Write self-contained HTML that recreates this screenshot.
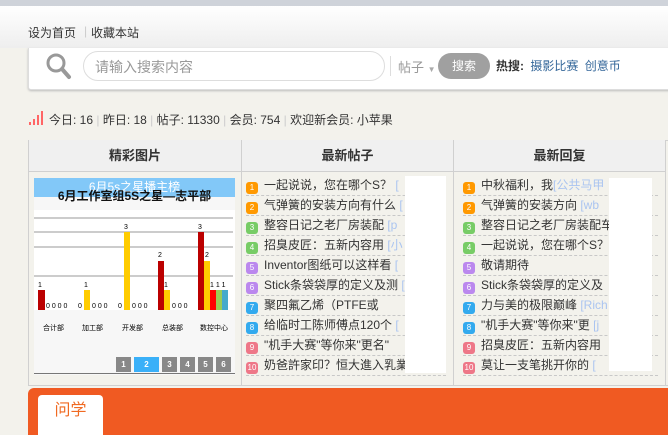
<!DOCTYPE html>
<html><head><meta charset="utf-8"><style>
*{margin:0;padding:0;box-sizing:border-box}
body{width:668px;height:435px;overflow:hidden;background:#f3f2ec;font-family:"Liberation Sans","Noto Sans CJK SC",sans-serif;font-size:12px;color:#333;position:relative}
.abs{position:absolute}
.top{left:0;top:0;width:668px;height:48px;background:linear-gradient(#fff,#eeeeee);border-top:6px solid #cfd3da}
.top span{position:absolute;top:18px;font-size:12px;color:#333}
.sp{left:28px;top:48px;width:650px;height:42px;background:#fff;border:1px solid #ddd;border-top:none;border-radius:0 0 3px 3px;box-shadow:0 1px 2px #bbb}
.inp{left:83px;top:51px;width:302px;height:30px;border:1px solid #ddd;border-radius:15px;background:#fff}
.tbl{left:28px;top:140px;width:645px;height:246px;border:1px solid #d0d0d0}
.th{top:140px;height:32px;background:#f0f0f0;border-bottom:1px solid #d0d0d0;text-align:center;line-height:31px;font-size:13px;color:#333}
.row{position:absolute;height:20px;line-height:19px;font-size:12px;color:#333;border-bottom:1px dashed #c8c8c8;white-space:nowrap;overflow:hidden}
.ic{display:inline-block;width:12px;height:12px;border-radius:3px;color:#fff;font-size:8px;line-height:12px;text-align:center;margin-right:6px;vertical-align:-1px}
.u{color:#aac4f0}
.pg{position:absolute;top:357px;width:15px;height:15px;background:#888;color:#fff;font-size:8px;text-align:center;line-height:15px;font-weight:bold}
</style></head><body>
<div class="abs top"><span style="left:28px">设为首页</span><span style="left:84px;color:#ccc">|</span><span style="left:91px">收藏本站</span></div>
<div class="abs sp"></div>
<svg class="abs" style="left:44px;top:52px" width="30" height="28"><circle cx="12" cy="11" r="8" fill="none" stroke="#999" stroke-width="3"/><line x1="18" y1="17" x2="25" y2="25" stroke="#999" stroke-width="4" stroke-linecap="round"/></svg>
<div class="abs inp"></div>
<div class="abs" style="left:95px;top:57px;font-size:14px;color:#999">请输入搜索内容</div>
<div class="abs" style="left:390px;top:56px;width:1px;height:20px;background:#ddd"></div>
<div class="abs" style="left:398px;top:57px;font-size:13px;color:#999">帖子 <span style="font-size:8px;color:#aaa">▼</span></div>
<div class="abs" style="left:438px;top:53px;width:52px;height:26px;border-radius:13px;background:#a0a0a0;color:#fff;text-align:center;line-height:26px;font-size:12px">搜索</div>
<div class="abs" style="left:496px;top:57px;font-size:12px"><b>热搜:</b> <span style="color:#336699;margin-left:3px">摄影比赛</span> <span style="color:#336699;margin-left:3px">创意币</span></div>
<svg class="abs" style="left:28px;top:111px" width="16" height="14"><rect x="1" y="11" width="2" height="3" fill="#f66"/><rect x="5" y="8" width="2" height="6" fill="#f66"/><rect x="9" y="4" width="2" height="10" fill="#f66"/><rect x="13" y="0" width="2" height="14" fill="#f66"/></svg>
<div class="abs" style="left:49px;top:111px;font-size:12px;color:#333">今日: 16 <span style="color:#ccc">|</span> 昨日: 18 <span style="color:#ccc">|</span> 帖子: 11330 <span style="color:#ccc">|</span> 会员: 754 <span style="color:#ccc">|</span> 欢迎新会员: 小苹果</div>
<div class="abs tbl"></div>
<div class="abs th" style="left:29px;width:212px;font-weight:bold">精彩图片</div>
<div class="abs th" style="left:241px;width:212px;border-left:1px solid #d0d0d0;font-weight:bold">最新帖子</div>
<div class="abs th" style="left:453px;width:212px;border-left:1px solid #d0d0d0;font-weight:bold">最新回复</div>
<div class="abs" style="left:241px;top:172px;width:1px;height:214px;background:#d0d0d0"></div>
<div class="abs" style="left:453px;top:172px;width:1px;height:214px;background:#d0d0d0"></div>
<div class="abs" style="left:665px;top:140px;width:1px;height:246px;background:#d0d0d0"></div>
<!-- chart -->
<div class="abs" style="left:34px;top:178px;width:201px;height:197px;background:#f7f7f7"></div>
<div class="abs" style="left:34px;top:178px;width:201px;height:19px;background:#82c8f8;color:#fff;text-align:center;font-size:12px;line-height:19px">6月5s之星播主榜</div>
<div class="abs" style="left:34px;top:187px;width:201px;text-align:center;font-weight:bold;font-size:12px;color:#111">6月工作室组5S之星—志平部</div>
<svg class="abs" style="left:34px;top:210px" width="201" height="100">
<rect x="0" y="0" width="201" height="100" fill="#fff"/>
<g stroke="#999" stroke-width="1"><line x1="0" y1="8" x2="199" y2="8"/><line x1="0" y1="22" x2="199" y2="22"/><line x1="0" y1="37" x2="199" y2="37"/><line x1="0" y1="66" x2="199" y2="66"/></g>
<rect x="4" y="80" width="7" height="20" fill="#b00"/><rect x="50" y="80" width="6" height="20" fill="#fc0"/>
<rect x="90" y="22" width="6" height="78" fill="#fc0"/>
<rect x="124" y="51" width="6" height="49" fill="#b00"/><rect x="130" y="80" width="6" height="20" fill="#fc0"/>
<rect x="164" y="22" width="6" height="78" fill="#b00"/><rect x="170" y="51" width="6" height="49" fill="#fc0"/><rect x="176" y="80" width="6" height="20" fill="#f00"/><rect x="182" y="80" width="6" height="20" fill="#9c5"/><rect x="188" y="80" width="6" height="20" fill="#4ac"/>
<g font-size="7" fill="#000"><text x="4" y="77">1</text><text x="50" y="77">1</text><text x="90" y="19">3</text><text x="124" y="47">2</text><text x="164" y="19">3</text><text x="171" y="47">2</text><text x="130" y="77">1</text><text x="176" y="77">1 1 1</text><text x="12" y="98">0 0 0 0</text><text x="44" y="98">0</text><text x="58" y="98">0 0 0</text><text x="84" y="98">0</text><text x="98" y="98">0 0 0</text><text x="138" y="98">0 0 0</text></g>
</svg>
<div class="abs" style="left:34px;top:323px;width:201px;font-size:7px;color:#000"><span style="position:absolute;left:9px">合计部</span><span style="position:absolute;left:48px">加工部</span><span style="position:absolute;left:88px">开发部</span><span style="position:absolute;left:128px">总装部</span><span style="position:absolute;left:166px">数控中心</span></div>
<div class="pg" style="left:116px">1</div><div class="pg" style="left:134px;width:25px;background:#3ab0f8">2</div><div class="pg" style="left:162px">3</div><div class="pg" style="left:180px">4</div><div class="pg" style="left:198px">5</div><div class="pg" style="left:216px">6</div>
<div class="abs" style="left:34px;top:373px;width:201px;height:1px;background:#777"></div>
<!-- lists -->
<div class="abs" style="left:246px;top:176px;width:200px">
<div class="row" style="top:0;width:200px"><span class="ic" style="background:#f90">1</span>一起说说，您在哪个S？ <span class="u">[</span></div>
<div class="row" style="top:20px;width:200px"><span class="ic" style="background:#f90">2</span>气弹簧的安装方向有什么 <span class="u">[</span></div>
<div class="row" style="top:40px;width:200px"><span class="ic" style="background:#7c6">3</span>整容日记之老厂房装配 <span class="u">[p</span></div>
<div class="row" style="top:60px;width:200px"><span class="ic" style="background:#7c6">4</span>招臭皮匠：五新内容用 <span class="u">[小</span></div>
<div class="row" style="top:80px;width:200px"><span class="ic" style="background:#b8e">5</span>Inventor图纸可以这样看 <span class="u">[</span></div>
<div class="row" style="top:100px;width:200px"><span class="ic" style="background:#b8e">6</span>Stick条袋袋厚的定义及测 <span class="u">[</span></div>
<div class="row" style="top:120px;width:200px"><span class="ic" style="background:#3ae">7</span>聚四氟乙烯（PTFE或</div>
<div class="row" style="top:140px;width:200px"><span class="ic" style="background:#3ae">8</span>给临时工陈师傅点120个 <span class="u">[</span></div>
<div class="row" style="top:160px;width:200px"><span class="ic" style="background:#e78">9</span>"机手大赛"等你来"更名"</div>
<div class="row" style="top:180px;width:200px"><span class="ic" style="background:#e78">10</span>奶爸許家印？恒大進入乳業</div>
</div>
<div class="abs" style="left:405px;top:176px;width:41px;height:197px;background:#fff"></div>
<div class="abs" style="left:463px;top:176px;width:195px">
<div class="row" style="top:0;width:195px"><span class="ic" style="background:#f90">1</span>中秋福利，我<span class="u">[公共马甲</span></div>
<div class="row" style="top:20px;width:195px"><span class="ic" style="background:#f90">2</span>气弹簧的安装方向 <span class="u">[wb</span></div>
<div class="row" style="top:40px;width:195px"><span class="ic" style="background:#7c6">3</span>整容日记之老厂房装配车</div>
<div class="row" style="top:60px;width:195px"><span class="ic" style="background:#7c6">4</span>一起说说，您在哪个S？</div>
<div class="row" style="top:80px;width:195px"><span class="ic" style="background:#b8e">5</span>敬请期待</div>
<div class="row" style="top:100px;width:195px"><span class="ic" style="background:#b8e">6</span>Stick条袋袋厚的定义及</div>
<div class="row" style="top:120px;width:195px"><span class="ic" style="background:#3ae">7</span>力与美的极限巅峰 <span class="u">[Rich</span></div>
<div class="row" style="top:140px;width:195px"><span class="ic" style="background:#3ae">8</span>"机手大赛"等你来"更 <span class="u">[j</span></div>
<div class="row" style="top:160px;width:195px"><span class="ic" style="background:#e78">9</span>招臭皮匠：五新内容用</div>
<div class="row" style="top:180px;width:195px"><span class="ic" style="background:#e78">10</span>莫让一支笔挑开你的 <span class="u">[</span></div>
</div>
<div class="abs" style="left:609px;top:178px;width:43px;height:193px;background:#fff"></div>
<!-- orange band -->
<div class="abs" style="left:28px;top:388px;width:650px;height:47px;background:#f05a22;border-radius:6px 0 0 0"></div>
<div class="abs" style="left:38px;top:395px;width:65px;height:40px;background:#fff;border-radius:4px 4px 0 0;color:#f06a22;font-size:16px;text-align:center;line-height:32px">问学</div>
</body></html>
